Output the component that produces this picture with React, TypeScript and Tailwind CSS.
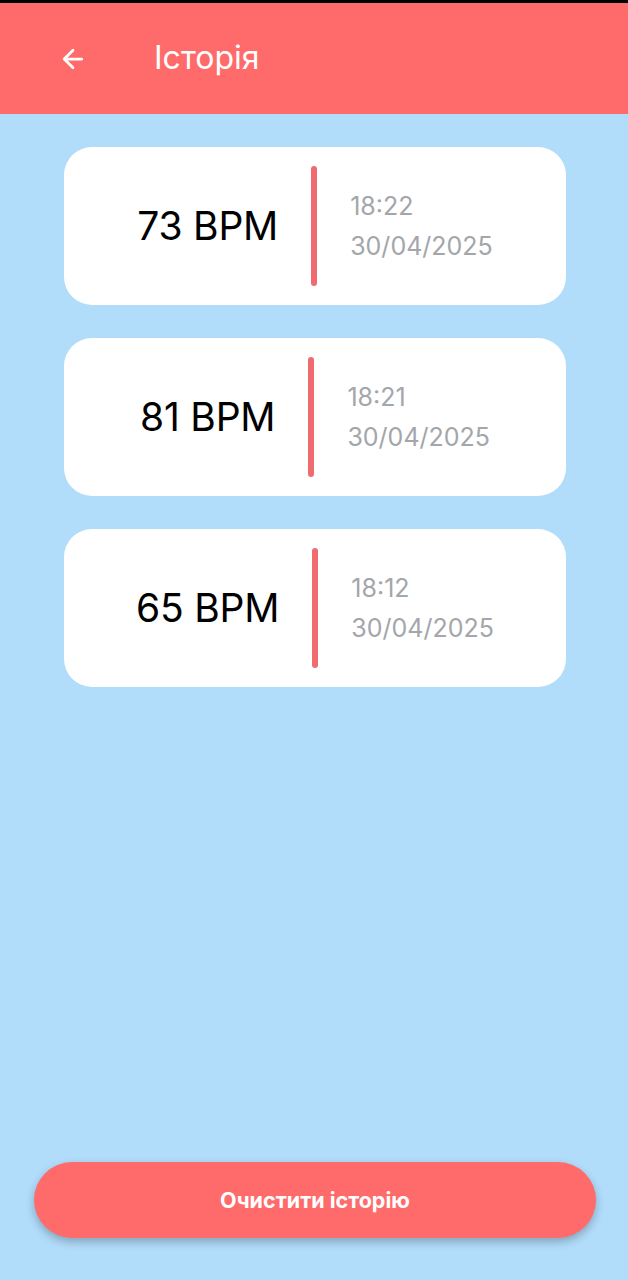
import { ArrowLeft } from "lucide-react";

type Entry = {
  bpm: number;
  time: string;
  date: string;
};

const entries: Entry[] = [
  { bpm: 73, time: "18:22", date: "30/04/2025" },
  { bpm: 81, time: "18:21", date: "30/04/2025" },
  { bpm: 65, time: "18:12", date: "30/04/2025" },
];

const App = () => {
  return (
    <div className="min-h-[1280px] w-[628px] flex flex-col bg-[#b1dcfa] font-['Inter',sans-serif]">
      <div className="h-[3px] bg-black" />
      <header className="h-[111px] bg-[#ff6b6b] flex items-center pl-[58px]">
        <ArrowLeft className="w-[30px] h-[30px] text-white" strokeWidth={2.2} />
        <h1 className="ml-[66px] text-[32px] text-white pb-[1px]">Історія</h1>
      </header>

      <ul className="flex flex-col gap-[33px] pl-[64px] pr-[62px] pt-[33px]">
        {entries.map((e, i) => (
          <li
            key={i}
            className="h-[158px] bg-white rounded-[28px] flex items-center justify-center gap-[33px]"
          >
            <span className="text-[39px] text-black tracking-[-0.2px]">{e.bpm} BPM</span>
            <div className="w-[6px] h-[120px] rounded-full bg-[#f06b6f]" />
            <div className="flex flex-col gap-[9px] text-[25px] text-[#a3a6aa] leading-[31px]">
              <span>{e.time}</span>
              <span>{e.date}</span>
            </div>
          </li>
        ))}
      </ul>

      <div className="flex-1" />
      <div className="pl-[34px] pr-[32px] pb-[42px]">
        <button className="w-full h-[76px] rounded-full bg-[#ff6b6b] text-white text-[21.5px] font-bold shadow-[0_4px_8px_rgba(0,0,0,0.25)]">
          Очистити історію
        </button>
      </div>
    </div>
  );
};

export default App;
